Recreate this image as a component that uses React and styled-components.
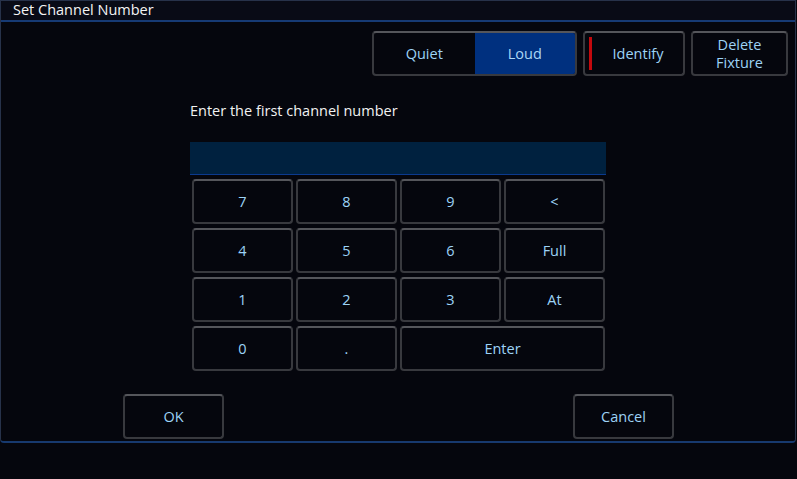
import React from "react";
import styled, { createGlobalStyle } from "styled-components";

const KEYS = [
    { label: "7" }, { label: "8" }, { label: "9" }, { label: "<" },
    { label: "4" }, { label: "5" }, { label: "6" }, { label: "Full" },
    { label: "1" }, { label: "2" }, { label: "3" }, { label: "At" },
    { label: "0" }, { label: "." }, { label: "Enter", span: 2 },
];

function App(){
    return (
        <>
            <GlobalStyle />
            <Dialog>
                <TitleBar>Set Channel Number</TitleBar>

                <Toolbar>
                    <Segmented>
                        <Segment>Quiet</Segment>
                        <Segment $active>Loud</Segment>
                    </Segmented>
                    <ToolButton $flagged>Identify</ToolButton>
                    <ToolButton $narrow>Delete<br />Fixture</ToolButton>
                </Toolbar>

                <Entry>
                    <Prompt>Enter the first channel number</Prompt>
                    <Field />
                    <Keypad>
                        {
                            KEYS.map(({ label, span }) => (
                                <Key key={label} $span={span}>{label}</Key>
                            ))
                        }
                    </Keypad>
                </Entry>

                <Footer>
                    <Key as="button" $wide>OK</Key>
                    <Key as="button" $wide>Cancel</Key>
                </Footer>
            </Dialog>
        </>
    )
}

const GlobalStyle = createGlobalStyle`
    html, body{
        margin: 0;
        background-color: #05060d;
        font-family: "Open Sans", "Noto Sans", sans-serif;
    }
`;

const Dialog = styled.div`
    width: 796px;
    height: 443px;
    box-sizing: border-box;
    border: 1px solid #27324a;
    border-bottom: 2px solid #17396e;
    border-radius: 0 0 4px 4px;
    display: flex;
    flex-direction: column;
`;

const TitleBar = styled.div`
    height: 21px;
    box-sizing: border-box;
    padding: 0 0 0 12px;
    background-color: #090b16;
    border-bottom: 2px solid #163a74;
    color: #f4f4f4;
    font-size: 14.5px;
    line-height: 18px;
`;

const Toolbar = styled.div`
    display: flex;
    justify-content: flex-end;
    gap: 6px;
    margin-top: 9px;
    padding-right: 7px;
`;

const buttonBase = `
    box-sizing: border-box;
    height: 45px;
    background-color: #05060d;
    border: 2px solid #38393e;
    border-top-color: #55565b;
    border-radius: 4px;
    color: #9dd3f6;
    font-family: "Open Sans", "Noto Sans", sans-serif;
    font-size: 14.5px;
    line-height: 17px;
    display: flex;
    align-items: center;
    justify-content: center;
    text-align: center;
`;

const Segmented = styled.div`
    ${buttonBase};
    width: 205px;
    padding: 0;
    overflow: hidden;
    justify-content: stretch;
    align-items: stretch;
`;

const Segment = styled.div`
    flex: 1;
    display: flex;
    align-items: center;
    justify-content: center;
    background-color: ${({ $active }) => $active ? "#00307f" : "transparent"};
    color: ${({ $active }) => $active ? "#acd8f6" : "#9dd3f6"};
`;

const ToolButton = styled.div`
    ${buttonBase};
    position: relative;
    width: ${({ $narrow }) => $narrow ? "97px" : "102px"};
    padding-left: ${({ $flagged }) => $flagged ? "8px" : "0"};
    line-height: ${({ $narrow }) => $narrow ? "18px" : "17px"};

    &::before{
        content: "";
        display: ${({ $flagged }) => $flagged ? "block" : "none"};
        position: absolute;
        left: 4px;
        top: 4px;
        bottom: 4px;
        width: 3px;
        background-color: #c4090d;
    }
`;

const Entry = styled.div`
    width: 416px;
    margin: 25px 0 0 189px;
    display: flex;
    flex-direction: column;
`;

const Prompt = styled.div`
    color: #f2f2f2;
    font-size: 14.5px;
    line-height: 20px;
    height: 20px;
    margin-bottom: 21px;
`;

const Field = styled.div`
    height: 33px;
    box-sizing: border-box;
    background-color: #00213f;
    border-bottom: 1px solid #0b3a8e;
    margin-bottom: 4px;
`;

const Keypad = styled.div`
    display: grid;
    grid-template-columns: repeat(4, 101px);
    grid-auto-rows: 45px;
    gap: 4px 3px;
    padding-left: 2px;
`;

const Key = styled.div`
    ${buttonBase};
    grid-column: span ${({ $span }) => $span || 1};
    width: ${({ $wide }) => $wide ? "101px" : "auto"};
    padding: 0;
`;

const Footer = styled.div`
    display: flex;
    justify-content: space-between;
    margin: 23px 0 0 122px;
    width: 551px;
`;

export default App;
